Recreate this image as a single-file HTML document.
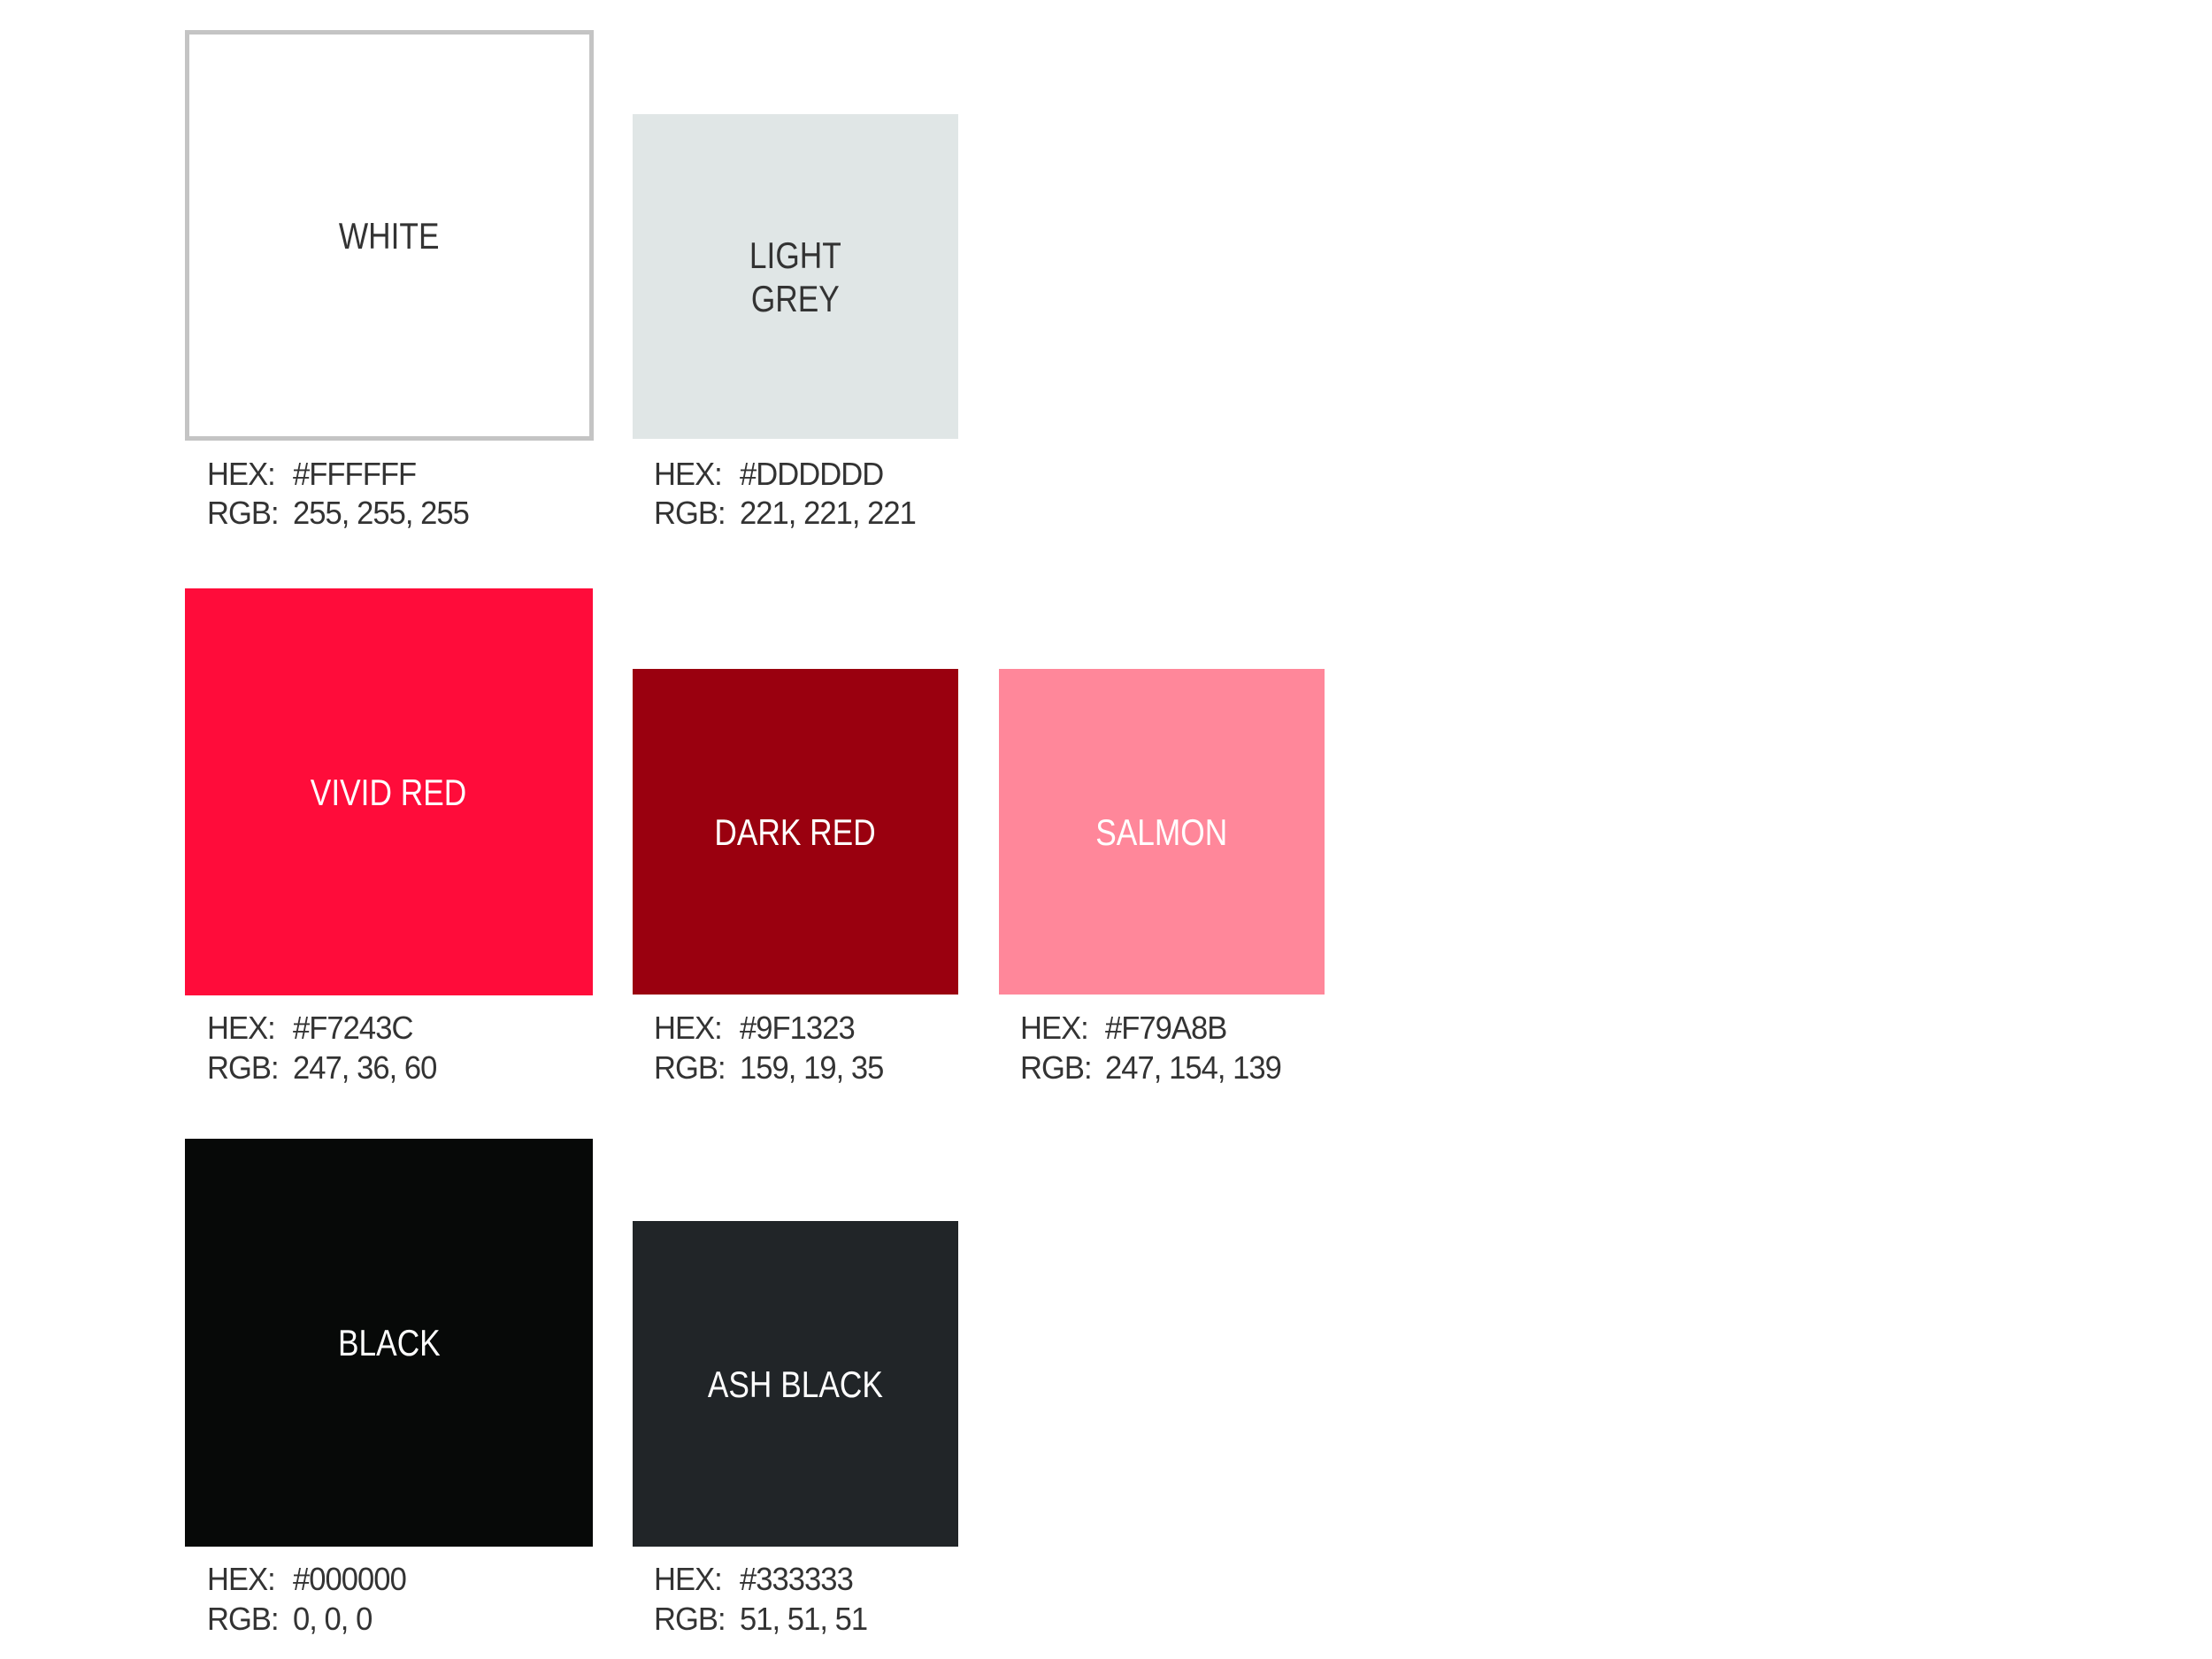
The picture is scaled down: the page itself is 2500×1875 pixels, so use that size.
<!DOCTYPE html>
<html><head><meta charset="utf-8"><style>
body{margin:0;width:2500px;height:1875px;background:#fff;position:relative;overflow:hidden;font-family:"Liberation Sans",sans-serif;}
.sw{position:absolute;box-sizing:border-box;display:flex;align-items:center;justify-content:center;text-align:center;}
.sw span{display:inline-block;font-size:42px;line-height:49px;transform:scaleX(0.84);}
.t{position:absolute;font-size:36px;color:#333;letter-spacing:-1px;white-space:pre;line-height:44px;transform:scaleX(0.96);transform-origin:left center;}
</style></head><body>
<div class="sw" style="left:209px;top:34px;width:462px;height:464px;border:5px solid #c4c4c4;background:#fff;color:#333"><span>WHITE</span></div>
<div class="sw" style="left:715px;top:129px;width:368px;height:367px;background:#e0e6e6;color:#333"><span>LIGHT<br>GREY</span></div>
<div class="sw" style="left:209px;top:665px;width:461px;height:460px;background:#ff0c3a;color:#fff"><span>VIVID RED</span></div>
<div class="sw" style="left:715px;top:756px;width:368px;height:368px;background:#9a000f;color:#fff"><span>DARK RED</span></div>
<div class="sw" style="left:1129px;top:756px;width:368px;height:368px;background:#ff879a;color:#fff"><span>SALMON</span></div>
<div class="sw" style="left:209px;top:1287px;width:461px;height:461px;background:#070908;color:#fff"><span>BLACK</span></div>
<div class="sw" style="left:715px;top:1380px;width:368px;height:368px;background:#212528;color:#fff"><span>ASH BLACK</span></div>

<div class="t" style="left:234px;top:514px">HEX:</div><div class="t" style="left:331px;top:514px">#FFFFFF</div>
<div class="t" style="left:234px;top:558px">RGB:</div><div class="t" style="left:331px;top:558px">255, 255, 255</div>
<div class="t" style="left:739px;top:514px">HEX:</div><div class="t" style="left:836px;top:514px">#DDDDDD</div>
<div class="t" style="left:739px;top:558px">RGB:</div><div class="t" style="left:836px;top:558px">221, 221, 221</div>

<div class="t" style="left:234px;top:1140px">HEX:</div><div class="t" style="left:331px;top:1140px">#F7243C</div>
<div class="t" style="left:234px;top:1185px">RGB:</div><div class="t" style="left:331px;top:1185px">247, 36, 60</div>
<div class="t" style="left:739px;top:1140px">HEX:</div><div class="t" style="left:836px;top:1140px">#9F1323</div>
<div class="t" style="left:739px;top:1185px">RGB:</div><div class="t" style="left:836px;top:1185px">159, 19, 35</div>
<div class="t" style="left:1153px;top:1140px">HEX:</div><div class="t" style="left:1249px;top:1140px">#F79A8B</div>
<div class="t" style="left:1153px;top:1185px">RGB:</div><div class="t" style="left:1249px;top:1185px">247, 154, 139</div>

<div class="t" style="left:234px;top:1763px">HEX:</div><div class="t" style="left:331px;top:1763px">#000000</div>
<div class="t" style="left:234px;top:1808px">RGB:</div><div class="t" style="left:331px;top:1808px">0, 0, 0</div>
<div class="t" style="left:739px;top:1763px">HEX:</div><div class="t" style="left:836px;top:1763px">#333333</div>
<div class="t" style="left:739px;top:1808px">RGB:</div><div class="t" style="left:836px;top:1808px">51, 51, 51</div>
</body></html>
